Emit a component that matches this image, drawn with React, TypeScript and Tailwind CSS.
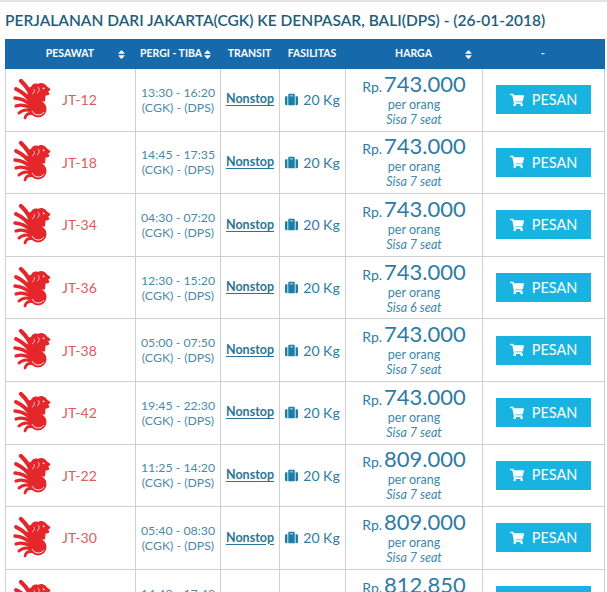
import { FaSort, FaShoppingCart, FaSuitcase } from "react-icons/fa";

type Flight = {
  code: string;
  time: string;
  price: string;
  seats: number;
};

const flights: Flight[] = [
  { code: "JT-12", time: "13:30 - 16:20", price: "743.000", seats: 7 },
  { code: "JT-18", time: "14:45 - 17:35", price: "743.000", seats: 7 },
  { code: "JT-34", time: "04:30 - 07:20", price: "743.000", seats: 7 },
  { code: "JT-36", time: "12:30 - 15:20", price: "743.000", seats: 6 },
  { code: "JT-38", time: "05:00 - 07:50", price: "743.000", seats: 7 },
  { code: "JT-42", time: "19:45 - 22:30", price: "743.000", seats: 7 },
  { code: "JT-22", time: "11:25 - 14:20", price: "809.000", seats: 7 },
  { code: "JT-30", time: "05:40 - 08:30", price: "809.000", seats: 7 },
  { code: "JT-14", time: "14:40 - 17:40", price: "812.850", seats: 7 },
];

const cols = "grid grid-cols-[130px_85px_59px_66px_137px_122px]";

// feather tips of the wing, around the sun at (24,30)
const feathers = [
  [7, 2, 4.2],
  [2, 10, 3.8],
  [1, 19, 3.5],
  [2, 27, 3.2],
  [5, 34, 3],
  [11, 39, 2.8],
];

function LionLogo() {
  const cx = 24;
  const cy = 30;
  return (
    <svg width="40" height="42" viewBox="0 0 38 42" className="shrink-0">
      {feathers.map(([tx, ty, w], i) => {
        const dx = tx - cx;
        const dy = ty - cy;
        const len = Math.hypot(dx, dy);
        const sx = cx + (dx / len) * 8;
        const sy = cy + (dy / len) * 8;
        // bend to the up-right side
        const qx = (sx + tx) / 2 + (dy / len) * -3.5;
        const qy = (sy + ty) / 2 + (dx / len) * 3.5;
        return (
          <path
            key={i}
            d={`M${sx} ${sy} Q${qx} ${qy} ${tx} ${ty}`}
            stroke="#e5262b"
            strokeWidth={w}
            strokeLinecap="round"
            fill="none"
          />
        );
      })}
      <circle cx={cx} cy={cy} r="8.5" fill="#e5262b" />
      <path d="M18 32 A7 7 0 0 0 30 33" stroke="#fff" strokeWidth="0.9" fill="none" />
      <path
        d="M15 23 C12 20 12 16.5 14 14.5 C12 11 14 8 17 8 C18 5 21 3.8 24 5 C27 3 31 4 33 7.5 L36.5 10 C36.3 11.2 35.4 12 34.2 12.5 L35.6 15 C34.4 16.2 32.8 16.6 31.6 16.6 L31 22.5 Z"
        fill="#e5262b"
      />
      <path d="M20 10 C21 12 20 14 18 15 M24 8 C26 10 25 13 23 14" stroke="#fff" strokeWidth="0.7" fill="none" />
      <circle cx="29.6" cy="9.3" r="0.9" fill="#fff" />
    </svg>
  );
}

function Row({ f }: { f: Flight }) {
  const cell = "border-r border-[#cfcfcf] flex items-center justify-center";
  return (
    <div className={`${cols} h-[62.6px] border-b border-l border-[#cfcfcf]`}>
      <div className={`${cell} !justify-start pl-[7px] gap-[9px]`}>
        <LionLogo />
        <span className="text-[14px] text-[#e05a5c]">{f.code}</span>
      </div>
      <div className={`${cell} flex-col text-[12.3px] leading-[15px] text-[#4b8aa7]`}>
        <span>{f.time}</span>
        <span>(CGK) - (DPS)</span>
      </div>
      <div className={cell}>
        <a className="text-[12.5px] font-bold text-[#2b7594] underline underline-offset-2">Nonstop</a>
      </div>
      <div className={`${cell} gap-[5px] text-[14px] text-[#2c7ca3]`}>
        <FaSuitcase className="text-[13px] text-[#1b7ea8]" />
        <span>20 Kg</span>
      </div>
      <div className={`${cell} flex-col text-[#2d7ba4]`}>
        <div className="flex items-baseline gap-[2px] leading-[22px]">
          <span className="text-[14px]">Rp.</span>
          <span className="text-[22px]">{f.price}</span>
        </div>
        <span className="text-[12.5px] leading-[14px] text-[#3c87ab]">per orang</span>
        <span className="text-[12.5px] leading-[15px] italic text-[#3c87ab]">Sisa {f.seats} seat</span>
      </div>
      <div className={cell}>
        <button className="flex h-[29px] w-[95px] items-center justify-center gap-[8px] bg-[#18b3e0] text-[14.5px] text-white">
          <FaShoppingCart className="text-[14px]" />
          PESAN
        </button>
      </div>
    </div>
  );
}

export default function App() {
  return (
    <div className="w-[607px] h-[592px] overflow-hidden bg-white font-['Lato','Liberation_Sans',sans-serif]">
      <div className="h-[2px] bg-[#e4e4e4]" />
      <h1 className="whitespace-nowrap pl-[5px] pt-[8px] pb-[9px] text-[15.5px] leading-[20px] font-semibold text-[#1e5d79]">
        PERJALANAN DARI JAKARTA(CGK) KE DENPASAR, BALI(DPS) - (26-01-2018)
      </h1>
      <div className="ml-[5px] w-[600px]">
        <div className={`${cols} h-[30px] bg-[#166aab] text-[10.5px] font-bold text-white`}>
          <div className="relative flex items-center justify-center">
            PESAWAT
            <FaSort className="absolute right-[8px] text-[11px]" />
          </div>
          <div className="relative flex items-center pl-[5px]">
            PERGI - TIBA
            <FaSort className="absolute right-[7px] text-[11px]" />
          </div>
          <div className="flex items-center justify-center">TRANSIT</div>
          <div className="flex items-center justify-center">FASILITAS</div>
          <div className="relative flex items-center justify-center">
            HARGA
            <FaSort className="absolute right-[8px] text-[11px]" />
          </div>
          <div className="flex items-center justify-center">-</div>
        </div>
        {flights.map((f) => (
          <Row key={f.code} f={f} />
        ))}
      </div>
    </div>
  );
}
